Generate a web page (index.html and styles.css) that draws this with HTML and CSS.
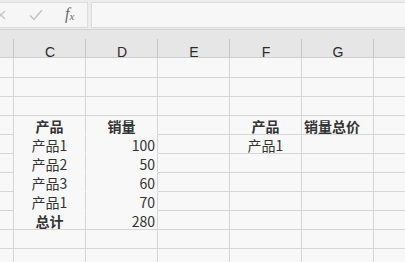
FILE: index.html
```html
<!DOCTYPE html>
<html lang="zh">
<head>
	<meta charset="utf-8">
	<title>销量</title>
	<link rel="stylesheet" href="styles.css">
</head>
<body>
	<div class="bar">
		<div class="tools">
			<svg class="ico cross" width="10" height="10" viewBox="0 0 10 10"><path d="M1 1L9 9M9 1L1 9" stroke="#c8c8c8" stroke-width="1.4" fill="none"/></svg>
			<svg class="ico check" width="14" height="12" viewBox="0 0 14 12"><path d="M1 6.5L5 10.5L13 1" stroke="#c4c4c4" stroke-width="1.5" fill="none"/></svg>
			<span class="fx">f<sub>x</sub></span>
		</div>
		<div class="input"></div>
	</div>
	<div class="sheet">
		<!-- column headers -->
		<div class="hd"></div><div class="hd">C</div><div class="hd">D</div><div class="hd">E</div><div class="hd">F</div><div class="hd">G</div><div class="hd last"></div>
		<!-- rows -->
		<div></div><div></div><div></div><div></div><div></div><div></div><div></div>
		<div></div><div></div><div></div><div></div><div></div><div></div><div></div>
		<div></div><div></div><div></div><div></div><div></div><div></div><div></div>

		<div></div><div class="c b nb">产品</div><div class="c b nb">销量</div><div></div><div class="c b">产品</div><div class="l b">销量总价</div><div></div>
		<div></div><div class="c nb">产品1</div><div class="r nb">100</div><div></div><div class="c">产品1</div><div></div><div></div>
		<div></div><div class="c nb">产品2</div><div class="r nb">50</div><div></div><div></div><div></div><div></div>
		<div></div><div class="c nb">产品3</div><div class="r nb">60</div><div></div><div></div><div></div><div></div>
		<div></div><div class="c nb">产品1</div><div class="r nb">70</div><div></div><div></div><div></div><div></div>
		<div></div><div class="c b">总计</div><div class="r">280</div><div></div><div></div><div></div><div></div>

		<div></div><div></div><div></div><div></div><div></div><div></div><div></div>
		<div></div><div></div><div></div><div></div><div></div><div></div><div></div>
	</div>
</body>
</html>
```

FILE: styles.css
```css
* {
	box-sizing: border-box;
}
body {
	margin: 0;
	background: #f8f8f8;
	font-family: "Noto Sans CJK SC", "Liberation Sans", sans-serif;
	overflow: hidden;
}
.bar {
	display: flex;
	gap: 3px;
	height: 30px;
	padding: 2px 0 1px;
	background: #ececec;
	border-bottom: 1px solid #d2d2d2;
}
.tools {
	width: 88px;
	display: flex;
	align-items: center;
	background: #f6f6f6;
	border: 1px solid #dcdcdc;
	border-left: none;
	overflow: hidden;
}
.cross {
	margin-left: -4px;
	flex: none;
}
.check {
	margin-left: 23px;
	flex: none;
}
.fx {
	font-family: "Liberation Serif", serif;
	font-style: italic;
	font-size: 16px;
	color: #6a6a6a;
	margin-left: 22px;
	margin-top: -2px;
}
.fx sub {
	font-size: 11px;
	vertical-align: -1px;
}
.input {
	flex: 1;
	background: #f7f7f7;
	border: 1px solid #dcdcdc;
	border-right: none;
}
.sheet {
	display: grid;
	grid-template-columns: 14px repeat(5, 72px) minmax(0, 1fr);
	grid-template-rows: 28px 20px;
	grid-auto-rows: 19px;
}
.sheet > div {
	border-right: 1px solid #d6d6d6;
	border-bottom: 1px solid #d6d6d6;
	font-size: 14px;
	line-height: 15px;
	color: #333;
	display: flex;
	align-items: flex-end;
	padding: 0 2px;
	white-space: nowrap;
}
.sheet > div:nth-child(7n) {
	border-right: none;
}
.sheet > .hd {
	background: #e6e6e6 linear-gradient(#c6c6c6, #c6c6c6) right bottom / 1px 18px no-repeat;
	border-right: none;
	border-bottom-color: #cfcfcf;
	justify-content: center;
	font-family: "Liberation Sans", sans-serif;
	font-size: 14px;
	line-height: 10px;
	padding-bottom: 0;
	color: #2a2a2a;
}
.sheet > .hd.last {
	background: #e6e6e6;
}
.c {
	justify-content: center;
}
.r {
	justify-content: flex-end;
}
.l {
	justify-content: flex-start;
	padding-left: 3px;
}
.b {
	font-weight: bold;
	color: #111;
}
.sheet > .nb {
	border-bottom-color: transparent;
}
```
